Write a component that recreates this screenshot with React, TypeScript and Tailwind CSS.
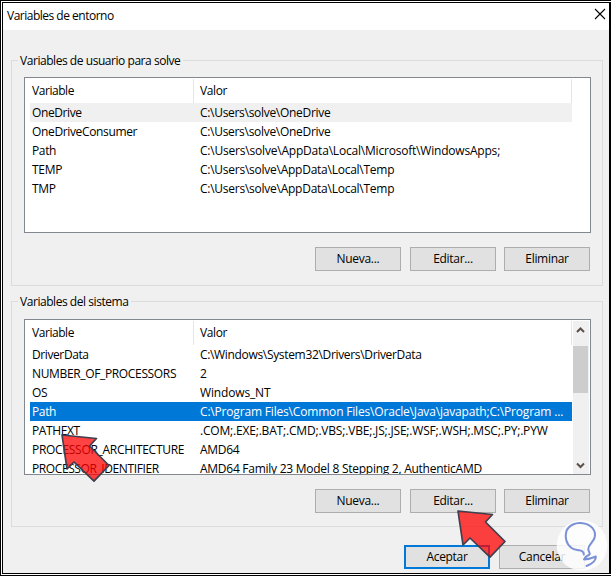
import type { ReactNode } from "react";

type Row = { name: string; value: string; nameClass?: string; valueClass?: string; state?: "hover" | "selected" };

const userRows: Row[] = [
  { name: "OneDrive", nameClass: "tracking-[-0.4px]", value: "C:\\Users\\solve\\OneDrive", state: "hover" },
  { name: "OneDriveConsumer", value: "C:\\Users\\solve\\OneDrive" },
  { name: "Path", value: "C:\\Users\\solve\\AppData\\Local\\Microsoft\\WindowsApps;", valueClass: "tracking-[-0.2px]" },
  { name: "TEMP", nameClass: "tracking-[-0.3px]", value: "C:\\Users\\solve\\AppData\\Local\\Temp", valueClass: "tracking-[-0.25px]" },
  { name: "TMP", value: "C:\\Users\\solve\\AppData\\Local\\Temp", valueClass: "tracking-[-0.25px]" },
];

const systemRows: Row[] = [
  { name: "DriverData", nameClass: "tracking-[-0.4px]", value: "C:\\Windows\\System32\\Drivers\\DriverData", valueClass: "tracking-[-0.33px]" },
  { name: "NUMBER_OF_PROCESSORS", value: "2" },
  { name: "OS", value: "Windows_NT", valueClass: "tracking-[-0.15px]" },
  {
    name: "Path",
    value: "C:\\Program Files\\Common Files\\Oracle\\Java\\javapath;C:\\Program ...",
    valueClass: "tracking-[-0.18px]",
    state: "selected",
  },
  { name: "PATHEXT", nameClass: "tracking-[-0.4px]", value: ".COM;.EXE;.BAT;.CMD;.VBS;.VBE;.JS;.JSE;.WSF;.WSH;.MSC;.PY;.PYW", valueClass: "tracking-[-0.19px]" },
  { name: "PROCESSOR_ARCHITECTURE", nameClass: "tracking-[-0.28px]", value: "AMD64" },
  {
    name: "PROCESSOR_IDENTIFIER",
    nameClass: "tracking-[-0.4px]",
    value: "AMD64 Family 23 Model 8 Stepping 2, AuthenticAMD",
    valueClass: "tracking-[-0.26px]",
  },
];

function Button({ children, primary = false }: { children: ReactNode; primary?: boolean }) {
  return (
    <button
      className={`flex h-6 w-[86px] shrink-0 items-center justify-center bg-[#e1e1e1] leading-none tracking-[-0.3px] ${
        primary ? "border-2 border-[#0078d7]" : "border border-[#adadad]"
      }`}
    >
      {children}
    </button>
  );
}

function ScrollBar() {
  return (
    <div className="mr-px mt-px flex w-4 shrink-0 flex-col bg-[#f0f0f0]">
      <svg className="h-[25px] w-4 shrink-0" viewBox="0 0 16 25" fill="none" stroke="#5a5048" strokeWidth="2">
        <path d="M4 11 L7.5 7.5 L11 11" />
      </svg>
      <div className="h-[47px] w-[15px] bg-[#cdcdcd]" />
      <svg className="mt-auto h-4 w-4 shrink-0" viewBox="0 0 16 16" fill="none" stroke="#5a5048" strokeWidth="2">
        <path d="M4 5.5 L7.5 9 L11 5.5" />
      </svg>
    </div>
  );
}

function ListView({ rows, scroll = false }: { rows: Row[]; scroll?: boolean }) {
  return (
    <div className="ml-3 flex h-[156px] w-[567px] overflow-hidden border border-[#828790] bg-white">
      <div className="ml-[5px] mr-px w-[542px] shrink-0 overflow-hidden pt-px">
        <div className="flex h-6 items-center">
          <div className="h-6 w-[164px] border-r border-[#e5e5e5] pl-0.5 leading-6 tracking-[-0.45px]">Variable</div>
          <div className="h-6 w-[378px] border-r border-[#e5e5e5] pl-1.5 leading-6 tracking-[-0.4px]">Valor</div>
        </div>
        {rows.map((row) => (
          <div
            key={row.name}
            className={`flex h-[19px] whitespace-pre leading-[19px] ${
              row.state === "selected" ? "bg-[#0078d7] text-white" : row.state === "hover" ? "bg-[#f0f0f0]" : ""
            }`}
          >
            <div className={`w-[164px] shrink-0 pl-0.5 ${row.nameClass ?? "tracking-[-0.35px]"}`}>{row.name}</div>
            <div className={`pl-1.5 ${row.valueClass ?? "tracking-[-0.3px]"}`}>{row.value}</div>
          </div>
        ))}
      </div>
      {scroll && <ScrollBar />}
    </div>
  );
}

function Group({ title, rows, scroll }: { title: string; rows: Row[]; scroll?: boolean }) {
  return (
    <section className="ml-2 h-[226px] w-[592px] border border-[#dcdcdc]">
      <h2 className="-mt-2.5 ml-1.5 h-[18px] w-fit bg-[#f0f0f0] pl-0.5 pr-[3px] leading-5 tracking-[-0.45px]">{title}</h2>
      <div className={scroll ? "mt-[9px]" : "mt-2"}>
        <ListView rows={rows} scroll={scroll} />
      </div>
      <div className="ml-[303px] mt-3.5 flex">
        <Button>Nueva...</Button>
        <div className="ml-[9px] mr-2">
          <Button>Editar...</Button>
        </div>
        <Button>Eliminar</Button>
      </div>
    </section>
  );
}

function Arrow({ className }: { className: string }) {
  return (
    <svg className={`absolute h-[56px] w-[56px] overflow-visible ${className}`} viewBox="0 0 56 56">
      <path
        d="M3 3 L37.5 6.5 L30.5 14 L50 33.5 L35 49.2 L15 30 L8 37 Z"
        fill="#ff0000"
        fillOpacity="0.74"
        stroke="#3f3f4d"
        strokeWidth="1.7"
        strokeLinejoin="round"
      />
    </svg>
  );
}

export default function App() {
  return (
    <main className="relative h-[576px] w-[611px] overflow-hidden border border-r-0 border-black bg-white p-px pr-0 font-['Open_Sans','Noto_Sans',sans-serif] text-[12px] text-black">
      <div className="flex h-[572px] w-[609px] flex-col border border-r-2 border-black bg-[#f0f0f0]">
        <header className="flex h-[27px] shrink-0 items-center justify-between bg-white pl-1 pr-[3px]">
          <h1 className="-mt-0.5 tracking-[-0.5px]">Variables de entorno</h1>
          <svg className="-mt-[5px] h-3 w-3" viewBox="0 0 12 12" stroke="#000" strokeWidth="1.1">
            <path d="M1 1 L11 11 M11 1 L1 11" />
          </svg>
        </header>
        <div className="mt-[30px] flex flex-col gap-[15px]">
          <Group title="Variables de usuario para solve" rows={userRows} />
          <Group title="Variables del sistema" rows={systemRows} scroll />
        </div>
        <footer className="ml-[401px] mt-[18px] flex gap-[9px]">
          <Button primary>Aceptar</Button>
          <Button>Cancelar</Button>
        </footer>
      </div>
      <Arrow className="left-[58px] top-[431px]" />
      <Arrow className="left-[454px] top-[507px]" />
      <svg className="absolute left-[549px] top-[515px] h-[60px] w-[62px]" viewBox="0 0 62 60" fill="none">
        <circle cx="32" cy="29.5" r="25.3" fill="#fff" fillOpacity="0.83" />
        <path
          d="M33.8 38.5 C34 32.5 27 36 21.5 32 C16 28 14.8 21 16.3 15.5 C18.5 9 26 6 33 7.3 C41 8.5 45.8 14 44.9 20.5 C44 26 38.5 28 38.3 33 C38.2 36 41 37.5 39.5 38.5 Q36 40 34 43.5 Q40 43 45.8 40.5 Q46.5 46 36.5 50"
          stroke="#7b90d6"
          strokeWidth="2"
          strokeLinecap="round"
          strokeLinejoin="round"
        />
      </svg>
    </main>
  );
}
